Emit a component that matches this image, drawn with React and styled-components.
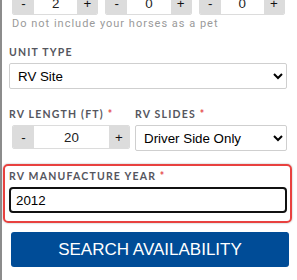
import React from 'react'
import styled, { createGlobalStyle } from 'styled-components'

const GlobalStyle = createGlobalStyle`
  * { box-sizing: border-box; }
  html, body { margin: 0; padding: 0; background: #fff; }
  body { font-family: 'Liberation Sans', Arial, sans-serif; overflow: hidden; }
`

const Panel = styled.div`
  margin-top: -9px;
  min-height: calc(100vh + 9px);
  border-left: 2px solid #8c8c8c;
  padding: 0 10px 0 7px;
`

const CounterRow = styled.div`
  display: grid;
  grid-template-columns: repeat(3, 1fr);
  gap: 7px;
  padding: 0 2px 0 3px;
`

const Stepper = styled.div`
  display: flex;
  height: 24px;
  border: 1px solid #dcdcdc;
  border-radius: 2px;
  overflow: hidden;
  background: #fff;
`

const StepButton = styled.button`
  flex: 0 0 ${p => p.$w || 20}px;
  border: none;
  margin: 0;
  padding: 0;
  background: #dcdcdc;
  color: #111;
  font: 13.33px 'Liberation Sans', Arial, sans-serif;
  cursor: pointer;
`

const StepValue = styled.input`
  flex: 1;
  min-width: 0;
  border: none;
  outline: none;
  text-align: center;
  color: #222;
  background: #fff;
  font: 13.33px 'Liberation Sans', Arial, sans-serif;
  padding: 0;
`

const Hint = styled.div`
  margin-top: 2px;
  padding-left: 3px;
  font-family: Roboto, 'Noto Sans', sans-serif;
  font-size: 11px;
  line-height: 14px;
  letter-spacing: 1px;
  color: #9a9a9a;
`

const Field = styled.div`
  margin-top: ${p => p.$top || 0}px;
  display: flex;
  flex-direction: column;
  min-width: 0;
`

const Label = styled.label`
  display: block;
  margin-bottom: 4px;
  font-family: Lato, 'Open Sans', sans-serif;
  font-weight: 700;
  font-size: 10.5px;
  line-height: 14px;
  letter-spacing: 1.2px;
  color: #55565e;
  white-space: nowrap;
`

const Req = styled.span`
  color: #e5484d;
`

const Select = styled.select`
  width: 100%;
  height: 26px;
  border: 1px solid #cfcfcf;
  border-radius: 2px;
  background: #fff;
  color: #000;
  padding: 0 4px;
  font: 13.33px 'Liberation Sans', Arial, sans-serif;
`

const PairRow = styled.div`
  margin-top: 18px;
  display: grid;
  grid-template-columns: 121px 1fr;
  gap: 5px;
`

const Indent = styled.div`
  padding-left: 3px;
`

const Highlight = styled.div`
  margin: 13px -5px 0 -6px;
  padding: 3px 3px 8px 4px;
  border: 2px solid #e8413f;
  border-radius: 5px;
  box-shadow: 0 0 2px rgba(0, 0, 0, 0.35);
`

const YearInput = styled.input`
  width: 100%;
  height: 26px;
  border: 2px solid #111;
  border-radius: 4px;
  padding: 0 5px;
  color: #000;
  background: #fff;
  font: 13.33px 'Liberation Sans', Arial, sans-serif;
  outline: none;
`

const SearchButton = styled.button`
  display: block;
  width: calc(100% + 0px);
  margin: 9px -2px 0 2px;
  height: 35px;
  border: none;
  border-radius: 3px;
  background: #004c97;
  color: #fff;
  font: 17px 'Liberation Sans', Arial, sans-serif;
  cursor: pointer;
`

const Counter = ({ value }) => (
  <Stepper>
    <StepButton $w={21}>-</StepButton>
    <StepValue defaultValue={value} />
    <StepButton $w={20}>+</StepButton>
  </Stepper>
)

const App = () => (
  <>
    <GlobalStyle />
    <Panel>
      <CounterRow>
        <Counter value="2" />
        <Counter value="0" />
        <Counter value="0" />
      </CounterRow>
      <Hint>Do not include your horses as a pet</Hint>

      <Field $top={14}>
        <Label>UNIT TYPE</Label>
        <Select defaultValue="rv">
          <option value="rv">RV Site</option>
          <option value="tent">Tent Site</option>
          <option value="cabin">Cabin</option>
        </Select>
      </Field>

      <PairRow>
        <Field>
          <Label>RV LENGTH (FT) <Req>*</Req></Label>
          <Indent>
            <Counter value="20" />
          </Indent>
        </Field>
        <Field>
          <Label>RV SLIDES <Req>*</Req></Label>
          <Select defaultValue="driver">
            <option value="none">None</option>
            <option value="driver">Driver Side Only</option>
            <option value="passenger">Passenger Side Only</option>
            <option value="both">Both Sides</option>
          </Select>
        </Field>
      </PairRow>

      <Highlight>
        <Label>RV MANUFACTURE YEAR <Req>*</Req></Label>
        <YearInput defaultValue="2012" />
      </Highlight>

      <SearchButton>SEARCH AVAILABILITY</SearchButton>
    </Panel>
  </>
)

export default App
